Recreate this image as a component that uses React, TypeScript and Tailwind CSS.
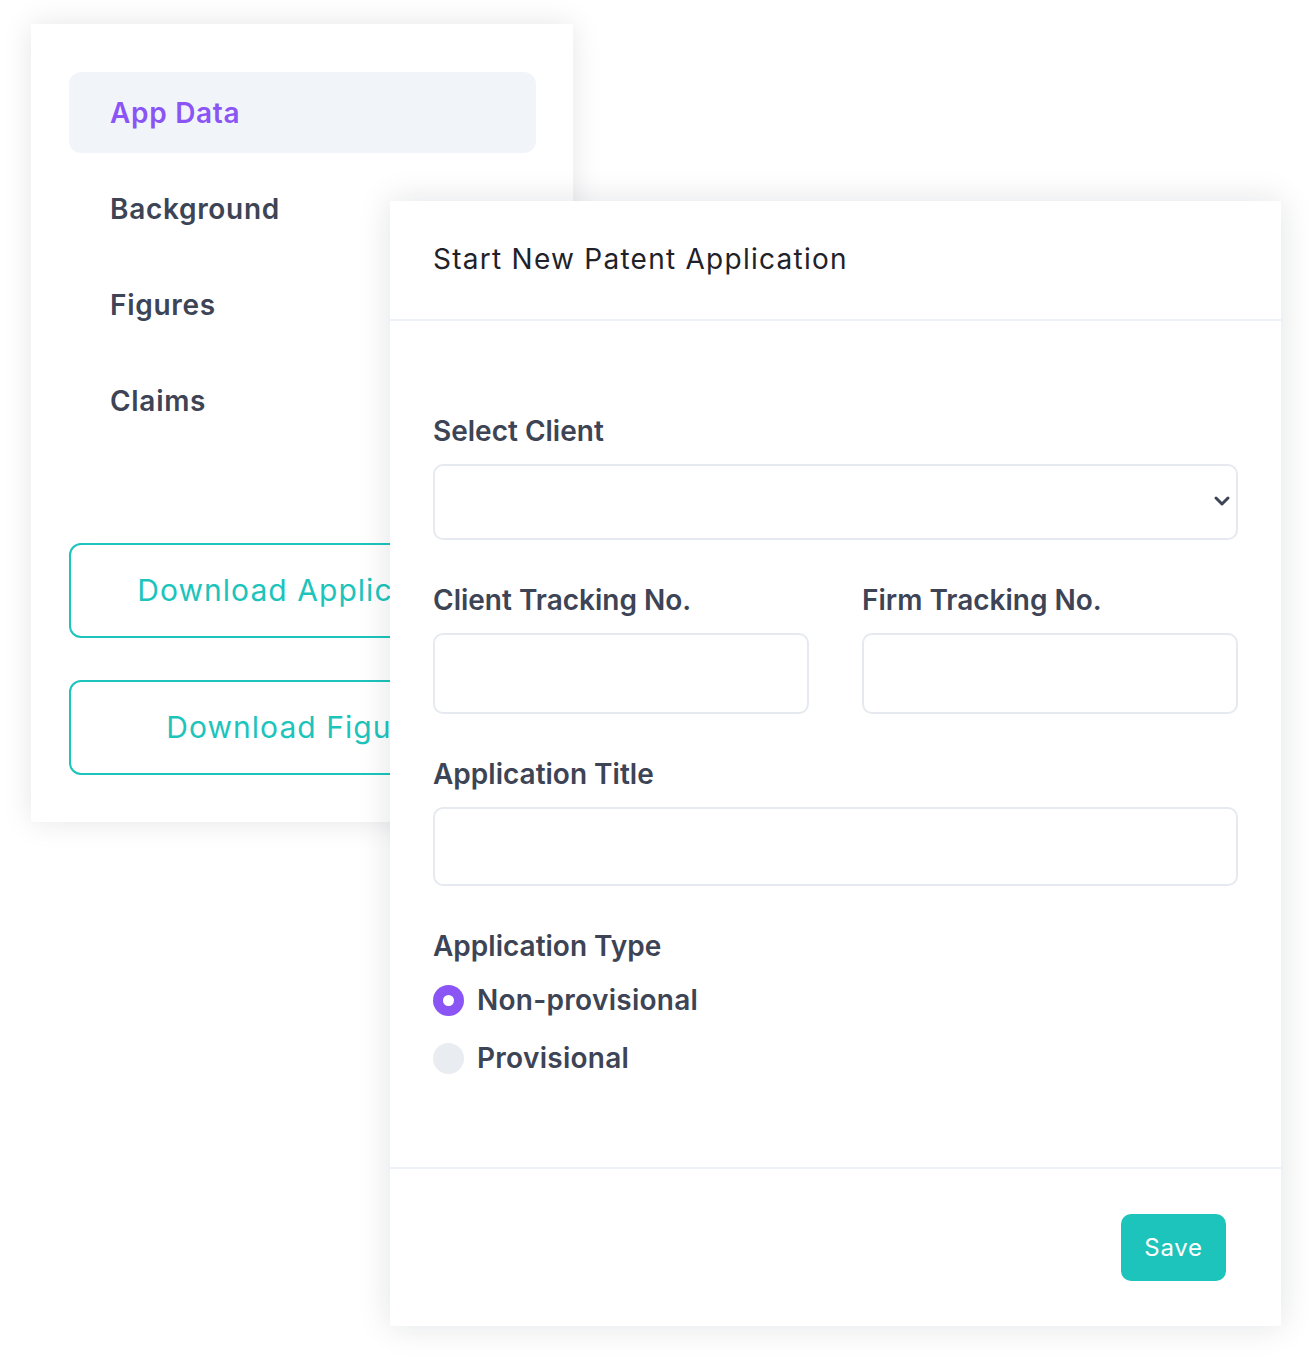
import React, { useState } from "react";

const font = { fontFamily: "Inter, 'Noto Sans', sans-serif" };

const navItems = ["App Data", "Background", "Figures", "Claims"];

function SidePanel() {
  const [active, setActive] = useState("App Data");

  return (
    <div className="absolute left-[31px] top-[24px] w-[542px] h-[798px] bg-white shadow-[0_0_28px_rgba(15,23,42,0.10)] pl-[38px] pt-[48px]">
      <nav className="flex flex-col gap-[15px] w-[467px]">
        {navItems.map((item) => (
          <button
            key={item}
            onClick={() => setActive(item)}
            className={`h-[81px] rounded-xl px-[41px] flex items-center text-[28px] font-semibold tracking-[0.025em] text-left ${
              active === item ? "bg-[#f1f5f9] text-[#8b55f6]" : "text-[#3d4455]"
            }`}
          >
            {item}
          </button>
        ))}
      </nav>

      <div className="mt-[102px] flex flex-col gap-[42px] w-[467px]">
        <button className="h-[95px] rounded-xl border-2 border-[#1cc4bc] text-[#1cc4bc] text-[30px] tracking-[0.035em] whitespace-nowrap">
          Download Application
        </button>
        <button className="h-[95px] rounded-xl border-2 border-[#1cc4bc] text-[#1cc4bc] text-[30px] tracking-[0.035em] whitespace-nowrap">
          Download Figures
        </button>
      </div>
    </div>
  );
}

function Label({ children }: { children: React.ReactNode }) {
  return <label className="block h-[36px] leading-[36px] text-[28px] font-semibold text-[#3d4455] mb-[15px]">{children}</label>;
}

function Radio({ checked, label, onClick }: { checked: boolean; label: string; onClick: () => void }) {
  return (
    <button onClick={onClick} className="flex items-center h-[36px] gap-[13px]">
      <span
        className={`w-[31px] h-[31px] rounded-full flex items-center justify-center ${
          checked ? "bg-[#8b55f6]" : "bg-[#e9edf2]"
        }`}
      >
        {checked && <span className="w-[11px] h-[11px] rounded-full bg-white" />}
      </span>
      <span className="text-[28px] font-semibold tracking-[0.01em] text-[#3d4455] leading-[36px]">{label}</span>
    </button>
  );
}

function NewApplication() {
  const [type, setType] = useState<"non" | "prov">("non");

  return (
    <div className="absolute left-[390px] top-[201px] w-[891px] h-[1125px] bg-white shadow-[0_0_32px_rgba(15,23,42,0.12)] flex flex-col">
      <div className="h-[120px] shrink-0 border-b-2 border-[#eef2f6] px-[43px] flex items-center">
        <h2 className="text-[28px] tracking-[0.045em] text-[#1f2228] -mt-[3px]">Start New Patent Application</h2>
      </div>

      <div className="flex-1 px-[43px] pt-[92px]">
        <Label>Select Client</Label>
        <div className="relative h-[76px] rounded-[10px] border-2 border-[#e6eaf0]">
          <svg
            className="absolute right-[5px] top-[28px]"
            width="18"
            height="14"
            viewBox="0 0 18 14"
            fill="none"
            stroke="#3d4455"
            strokeWidth="3"
            strokeLinecap="round"
            strokeLinejoin="round"
          >
            <path d="M3 4l6 6 6-6" />
          </svg>
        </div>

        <div className="grid grid-cols-2 gap-[53px] mt-[42px]">
          <div>
            <Label>Client Tracking No.</Label>
            <div className="h-[81px] rounded-[10px] border-2 border-[#e6eaf0]" />
          </div>
          <div>
            <Label>Firm Tracking No.</Label>
            <div className="h-[81px] rounded-[10px] border-2 border-[#e6eaf0]" />
          </div>
        </div>

        <div className="mt-[42px]">
          <Label>Application Title</Label>
          <div className="h-[79px] rounded-[10px] border-2 border-[#e6eaf0]" />
        </div>

        <div className="mt-[42px]">
          <Label>Application Type</Label>
          <div className="flex flex-col gap-[22px] pt-[3px]">
            <Radio checked={type === "non"} label="Non-provisional" onClick={() => setType("non")} />
            <Radio checked={type === "prov"} label="Provisional" onClick={() => setType("prov")} />
          </div>
        </div>
      </div>

      <div className="h-[159px] shrink-0 border-t-2 border-[#eef2f6] flex items-center justify-end pr-[55px]">
        <button className="w-[105px] h-[67px] rounded-[10px] bg-[#1cc4bc] text-white text-[24px] tracking-[0.03em]">Save</button>
      </div>
    </div>
  );
}

export default function App() {
  return (
    <div className="relative w-[1310px] h-[1360px] bg-white overflow-hidden" style={font}>
      <SidePanel />
      <NewApplication />
    </div>
  );
}
